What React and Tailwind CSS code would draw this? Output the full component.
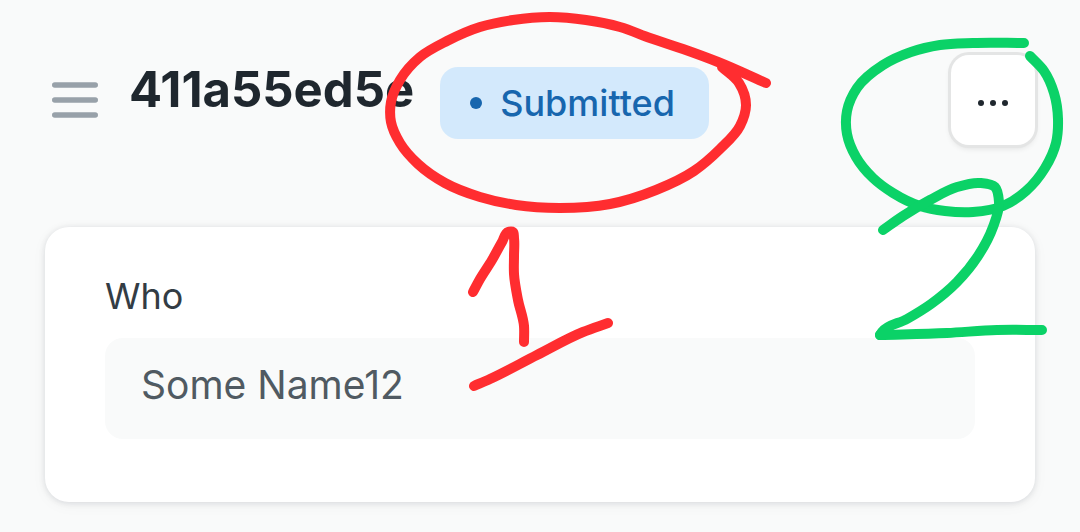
const markerStrokes = [
  {
    color: "#ff2d30",
    points: [
      [766, 83], [718, 62], [683, 49], [650, 38], [620, 27], [586, 20], [550, 17], [513, 20],
      [480, 27], [447, 41], [420, 57], [400, 80], [391, 102], [391, 122], [400, 143],
      [418, 164], [445, 183], [480, 197], [516, 205], [560, 208], [610, 204], [656, 190],
      [694, 171], [720, 149], [740, 126], [746, 105], [739, 83], [722, 67],
    ],
  },
  {
    color: "#ff2d30",
    points: [
      [473, 292], [480, 279], [492, 260], [502, 242], [508, 232], [513, 232], [514, 238],
      [514, 256], [514, 274], [518, 300], [524, 326], [524, 342],
    ],
  },
  {
    color: "#ff2d30",
    points: [[474, 386], [490, 379], [537, 355], [583, 332], [608, 323]],
  },
  {
    color: "#0bd267",
    points: [
      [1024, 43], [973, 43], [940, 45], [911, 52], [883, 65], [857, 88], [847, 111],
      [847, 134], [856, 157], [873, 178], [893, 193], [920, 206], [945, 211], [973, 212],
      [1003, 206], [1026, 191], [1045, 168], [1056, 143], [1058, 119], [1054, 93],
      [1044, 71], [1030, 56],
    ],
  },
  {
    color: "#0bd267",
    points: [
      [883, 230], [903, 216], [930, 200], [957, 187], [980, 183], [995, 187], [999, 202],
      [993, 227], [978, 256], [957, 282], [931, 304], [907, 319], [882, 332], [880, 335],
    ],
  },
  {
    color: "#0bd267",
    points: [[880, 335], [947, 333], [997, 330], [1042, 330]],
  },
];

// Spline through the points, written as cubic Béziers. The direction at each
// point leans towards its shorter neighbouring segment.
function smoothPath(points) {
  const segments = points.slice(1).map(([x, y], i) => {
    const dx = x - points[i][0];
    const dy = y - points[i][1];
    const length = Math.hypot(dx, dy);
    return { length, x: dx / length, y: dy / length };
  });
  const directions = points.map((_, i) => {
    const before = segments[i - 1] || segments[i];
    const after = segments[i] || before;
    const total = before.length + after.length;
    return [
      (before.x * after.length + after.x * before.length) / total,
      (before.y * after.length + after.y * before.length) / total,
    ];
  });
  let d = `M${points[0][0]} ${points[0][1]}`;
  segments.forEach(({ length }, i) => {
    const [x1, y1] = points[i];
    const [x2, y2] = points[i + 1];
    const [ax, ay] = directions[i];
    const [bx, by] = directions[i + 1];
    const h = length / 3;
    d += `C${x1 + ax * h} ${y1 + ay * h} ${x2 - bx * h} ${y2 - by * h} ${x2} ${y2}`;
  });
  return d;
}

function MarkerNotes() {
  return (
    <svg
      className="pointer-events-none absolute top-0 left-0"
      width="1080"
      height="532"
      viewBox="0 0 1080 532"
      fill="none"
      strokeWidth="10"
      strokeLinecap="round"
      strokeLinejoin="round"
      aria-hidden="true"
    >
      {markerStrokes.map((stroke, i) => (
        <path key={i} d={smoothPath(stroke.points)} stroke={stroke.color} />
      ))}
    </svg>
  );
}

function Header() {
  return (
    <header className="flex items-start justify-between gap-6 pl-[7px]">
      <div className="flex items-start">
        <button type="button" aria-label="Toggle sidebar" className="mt-[27px] mr-[31px]">
          <svg width="46" height="36" viewBox="0 0 46 36" stroke="#98a1a9" strokeWidth="5.6" strokeLinecap="round">
            <path d="M2.8 3H43.2M2.8 18H43.2M2.8 33H43.2" />
          </svg>
        </button>
        <h1 className="mt-3 text-[49px] leading-[46px] font-bold text-[#1f272e]">411a55ed5e</h1>
        <span className="mt-3 ml-[26px] flex h-[72px] items-center gap-[18px] rounded-[18px] bg-[#d3e9fc] pr-[34px] pl-[30px] text-[36px] leading-none font-medium text-[#1766ae] [font-variant-ligatures:none]">
          <span className="size-3 rounded-full bg-[#1766ae]" />
          Submitted
        </span>
      </div>
      <button
        type="button"
        aria-label="More options"
        className="flex h-[90px] w-[84px] items-center justify-center rounded-[18px] bg-white pt-1.5 shadow-[0_0_0_3px_#e4e5e5,0_3px_6px_rgba(0,0,0,0.12)]"
      >
        <svg width="30" height="6" viewBox="0 0 30 6" fill="#1f272e">
          <circle cx="3" cy="3" r="3" />
          <circle cx="15" cy="3" r="3" />
          <circle cx="27" cy="3" r="3" />
        </svg>
      </button>
    </header>
  );
}

export default function App() {
  return (
    <div className="relative min-h-screen overflow-hidden bg-[#f9fafa] px-[45px] pt-[55px] pb-[30px] font-['Inter',sans-serif]">
      <Header />
      <main className="mt-[82px] rounded-[24px] bg-white px-[60px] pt-[47px] pb-[63px] shadow-[0_1px_6px_rgba(17,24,39,0.12),0_3px_16px_rgba(17,24,39,0.04)]">
        <label htmlFor="who" className="block text-[36px] leading-[44px] text-[#333c44]">
          Who
        </label>
        <input
          id="who"
          type="text"
          readOnly
          defaultValue="Some Name12"
          className="mt-5 block h-[101px] w-full rounded-[18px] bg-[#f9fafa] px-9 pb-2 text-[39px] text-[#505a62] outline-none"
        />
      </main>
      <MarkerNotes />
    </div>
  );
}
